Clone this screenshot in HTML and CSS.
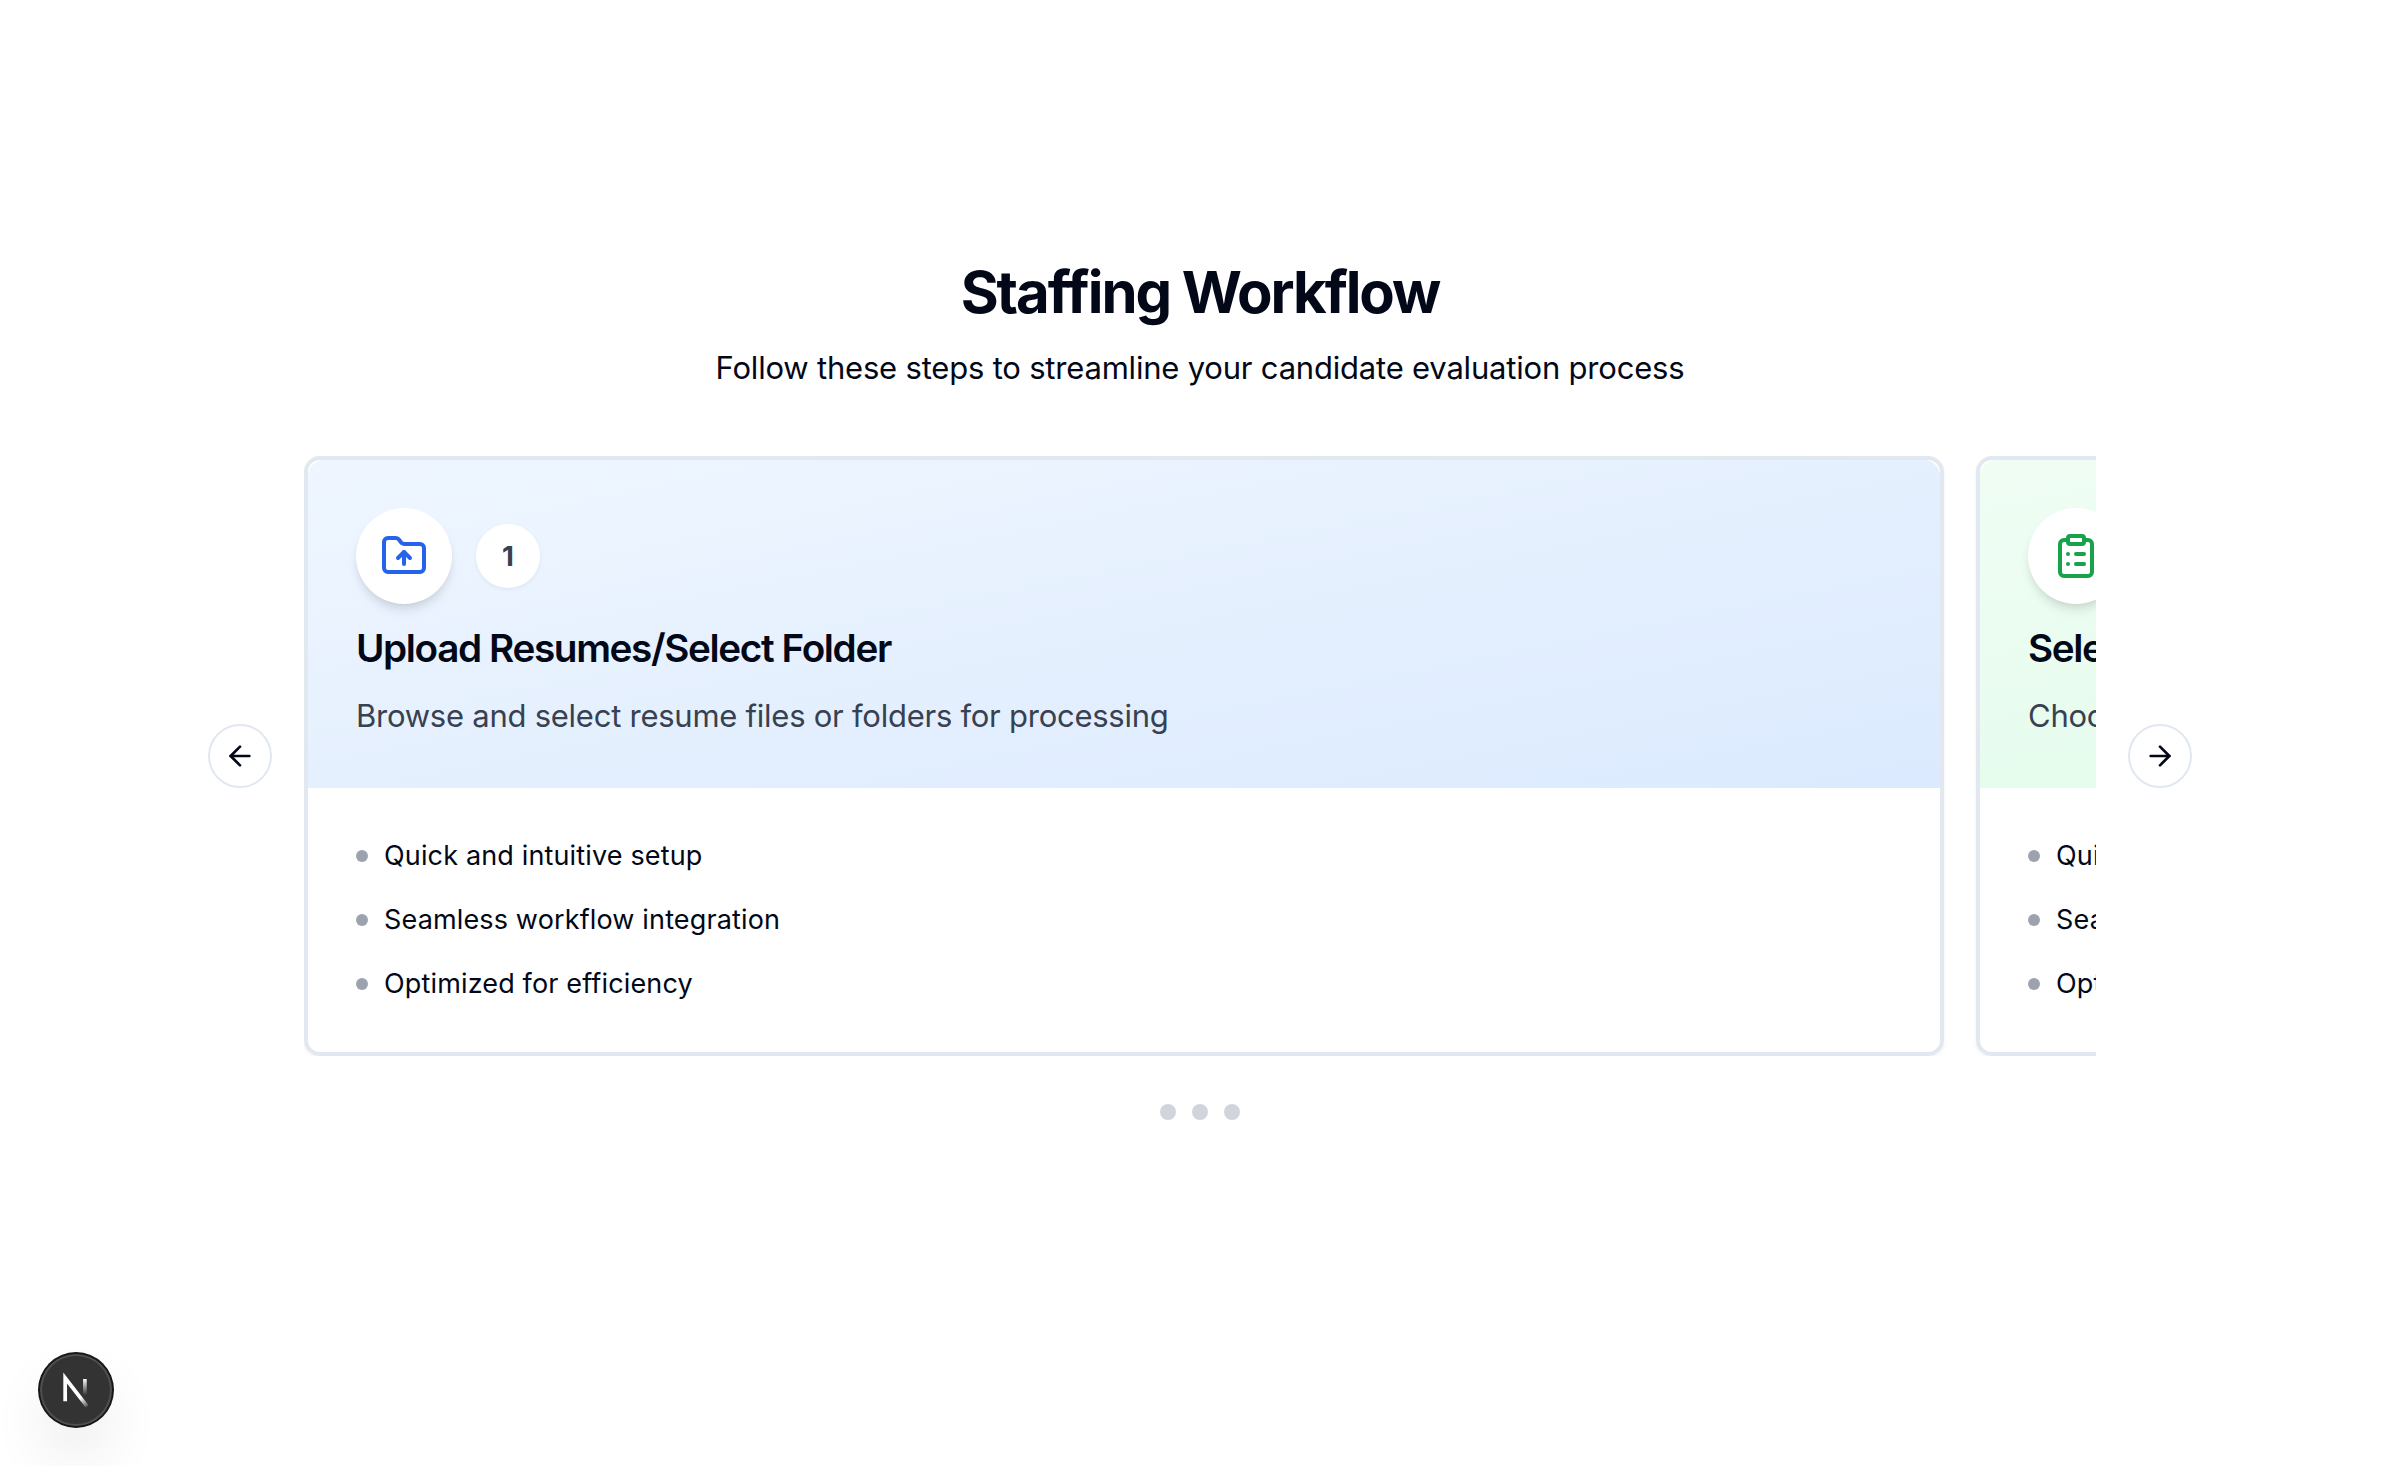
FILE: index.html
```html
<!DOCTYPE html>
<html lang="en">
<head>
<meta charset="utf-8">
<title>Staffing Workflow</title>
<link rel="stylesheet" href="styles.css">
</head>
<body>
<main class="workflow">
  <header class="intro">
    <h1 class="intro-title">Staffing Workflow</h1>
    <p class="intro-text">Follow these steps to streamline your candidate evaluation process</p>
  </header>

  <section class="carousel">
    <button class="nav-button" type="button" aria-label="Previous">
      <svg class="icon nav-icon" viewBox="0 0 24 24"><path d="m12 19-7-7 7-7"/><path d="M19 12H5"/></svg>
    </button>
    <div class="viewport">
      <div class="track">
        <article class="card">
          <div class="card-header blue">
            <div class="badges">
              <span class="badge-icon"><svg class="icon" viewBox="0 0 24 24"><path d="M20 20a2 2 0 0 0 2-2V8a2 2 0 0 0-2-2h-7.9a2 2 0 0 1-1.69-.9L9.6 3.9A2 2 0 0 0 7.93 3H4a2 2 0 0 0-2 2v13a2 2 0 0 0 2 2Z"/><path d="M12 10v6"/><path d="m9 13 3-3 3 3"/></svg></span>
              <span class="badge-number">1</span>
            </div>
            <h2 class="card-title">Upload Resumes/Select Folder</h2>
            <p class="card-text">Browse and select resume files or folders for processing</p>
          </div>
          <ul class="features">
            <li>Quick and intuitive setup</li>
            <li>Seamless workflow integration</li>
            <li>Optimized for efficiency</li>
          </ul>
        </article>
        <article class="card">
          <div class="card-header green">
            <div class="badges">
              <span class="badge-icon"><svg class="icon" viewBox="0 0 24 24"><rect width="8" height="4" x="8" y="2" rx="1" ry="1"/><path d="M16 4h2a2 2 0 0 1 2 2v14a2 2 0 0 1-2 2H6a2 2 0 0 1-2-2V6a2 2 0 0 1 2-2h2"/><path d="M12 11h4"/><path d="M12 16h4"/><path d="M8 11h.01"/><path d="M8 16h.01"/></svg></span>
            </div>
            <h2 class="card-title">Select</h2>
            <p class="card-text">Choose</p>
          </div>
          <ul class="features">
            <li>Quick and intuitive setup</li>
            <li>Seamless workflow integration</li>
            <li>Optimized for efficiency</li>
          </ul>
        </article>
      </div>
    </div>
    <button class="nav-button" type="button" aria-label="Next">
      <svg class="icon nav-icon" viewBox="0 0 24 24"><path d="M5 12h14"/><path d="m12 5 7 7-7 7"/></svg>
    </button>
  </section>

  <div class="dots"><span class="dot"></span><span class="dot"></span><span class="dot"></span></div>
</main>

<div class="dev-badge">
  <svg class="dev-logo" viewBox="0 0 36 36" fill="none">
    <defs>
      <linearGradient id="diagonal-fade" gradientUnits="userSpaceOnUse" x1="9.956" y1="11.123" x2="14" y2="16.2">
        <stop stop-color="#fff"/><stop offset="1" stop-color="#fff" stop-opacity="0"/>
      </linearGradient>
      <linearGradient id="stem-fade" gradientUnits="userSpaceOnUse" x1="12.2" y1="1.4" x2="12.2" y2="9.625">
        <stop stop-color="#fff"/><stop offset="1" stop-color="#fff" stop-opacity="0"/>
      </linearGradient>
    </defs>
    <g transform="translate(10.25 11)" stroke-width="1.86">
      <path d="M13.3 15.2 2.34 1v11.6" stroke="url(#diagonal-fade)"/>
      <path d="M12.2 1.5v11.6" stroke="url(#stem-fade)"/>
    </g>
  </svg>
</div>
</body>
</html>
```
FILE: styles.css
```css
* { box-sizing: border-box; margin: 0; padding: 0; }

body {
  min-height: 100vh;
  overflow: hidden;
  background: #fff;
  color: #020817;
  font-family: Inter, "Liberation Sans", sans-serif;
  font-size: 31px;
  line-height: 48px;
}

.workflow { padding: 256px 208px 0; }

.intro { display: flex; flex-direction: column; align-items: center; gap: 16px; margin-bottom: 64px; white-space: nowrap; }
.intro-title { font-size: 58px; line-height: 72px; font-weight: 700; letter-spacing: -2.05px; }
.intro-text { letter-spacing: -0.2px; }

.carousel { display: flex; align-items: center; gap: 32px; }
.viewport { flex: 1; min-width: 0; overflow: hidden; }
.track { display: flex; gap: 32px; }

.nav-button {
  display: flex;
  align-items: center;
  justify-content: center;
  width: 64px;
  height: 64px;
  border: 2px solid #e2e8f0;
  border-radius: 50%;
  background: #fff;
  color: inherit;
}

.icon { width: 48px; height: 48px; fill: none; stroke: currentColor; stroke-width: 2; stroke-linecap: round; stroke-linejoin: round; }
.nav-icon { width: 32px; height: 32px; }

.card {
  flex: 0 0 1640px;
  border: 4px solid #e2e8f0;
  border-radius: 16px;
  background: #fff;
  box-shadow: 0 2px 4px rgb(0 0 0 / 0.05);
}
.card-header { display: flex; flex-direction: column; gap: 24px; padding: 48px; border-radius: 16px 16px 0 0; }
.blue { background: linear-gradient(to bottom right, #eff6ff, #dbeafe); }
.green { background: linear-gradient(to bottom right, #f0fdf4, #dcfce7); }
.blue .badge-icon { color: #2563eb; }
.green .badge-icon { color: #16a34a; }

.badges { display: flex; align-items: center; gap: 24px; }
.badge-icon, .badge-number { display: flex; align-items: center; justify-content: center; border-radius: 50%; background: #fff; }
.badge-icon { width: 96px; height: 96px; box-shadow: 0 8px 12px -2px rgb(0 0 0 / 0.1), 0 4px 8px -4px rgb(0 0 0 / 0.1); }
.badge-number { width: 64px; height: 64px; color: #374151; font-size: 27.5px; font-weight: 700; box-shadow: 0 2px 4px rgb(0 0 0 / 0.05); }

.card-title { font-size: 38.7px; line-height: 40px; font-weight: 600; letter-spacing: -1.38px; white-space: nowrap; }
.card-text { color: #374151; letter-spacing: -0.25px; white-space: nowrap; }

.features { display: flex; flex-direction: column; gap: 24px; padding: 48px; list-style: none; font-size: 27px; line-height: 40px; letter-spacing: 0.15px; }
.features li { display: flex; align-items: center; gap: 16px; }
.features li::before { content: ""; width: 12px; height: 12px; border-radius: 50%; background: #9ca3af; }

.dots { display: flex; justify-content: center; gap: 16px; margin-top: 48px; }
.dot { width: 16px; height: 16px; border-radius: 50%; background: #d1d5db; }

.dev-badge {
  position: fixed;
  left: 40px;
  bottom: 40px;
  width: 72px;
  height: 72px;
  border-radius: 50%;
  background: #333;
  box-shadow: 0 0 0 2px #171717, inset 0 0 0 2px rgb(255 255 255 / 0.14), 0 32px 64px -16px rgb(0 0 0 / 0.24);
}
.dev-logo { display: block; width: 72px; height: 72px; }
```
